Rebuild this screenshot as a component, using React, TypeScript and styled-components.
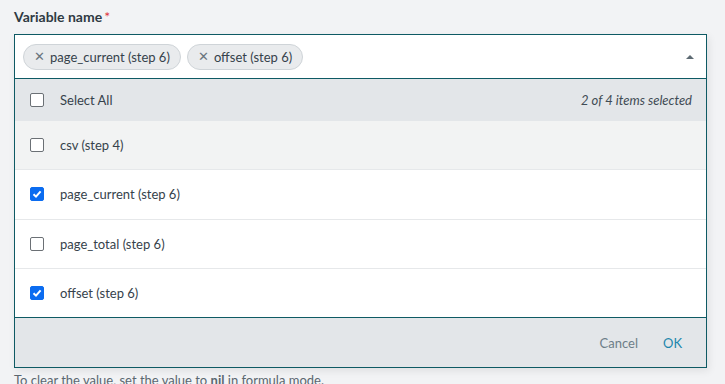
import React from "react";
import styled, { createGlobalStyle } from "styled-components";

const GlobalStyle = createGlobalStyle`
  body {
    margin: 0;
    background: #f2f3f5;
    font-family: "Lato", "Open Sans", sans-serif;
    color: #36424b;
  }
`;

const Page = styled.div`
  padding: 8px 18px 0 14px;
  height: 384px;
  overflow: hidden;
  box-sizing: border-box;
`;

const Label = styled.div`
  font-size: 14px;
  font-weight: 700;
  color: #2f3a43;
  height: 18px;
  line-height: 18px;
  margin-bottom: 8px;
`;

const Required = styled.span`
  color: #e0333a;
  font-weight: 400;
  margin-left: 2px;
`;

const Dropdown = styled.div`
  border: 1px solid #0e5a64;
  background: #fff;
  box-shadow: 2px 3px 8px rgba(0, 0, 0, 0.08);
`;

const Input = styled.div`
  height: 43px;
  display: flex;
  align-items: center;
  padding: 0 12px 0 8px;
  gap: 6px;
  border-bottom: 1px solid #0e5a64;
`;

const Chip = styled.div`
  display: flex;
  align-items: center;
  gap: 5px;
  height: 24px;
  padding: 0 10px;
  border: 1px solid #cfd4d8;
  border-radius: 13px;
  background: #e9ebed;
  font-size: 13px;
  color: #36424b;
`;

const ChipX = styled.span`
  font-size: 13px;
  color: #6a757d;
  line-height: 1;
`;

const Caret = styled.div`
  margin-left: auto;
  width: 0;
  height: 0;
  border-left: 4px solid transparent;
  border-right: 4px solid transparent;
  border-bottom: 4px solid #5d6a73;
`;

const Header = styled.div`
  height: 42px;
  background: #e3e6e9;
  display: flex;
  align-items: center;
  padding: 0 14px 0 15px;
  font-size: 13px;
`;

const Counter = styled.span`
  margin-left: auto;
  font-style: italic;
  color: #3f4b54;
`;

const Row = styled.div<{ $hover?: boolean; $last?: boolean }>`
  height: 48.25px;
  display: flex;
  align-items: center;
  padding: 0 15px;
  font-size: 13px;
  background: ${(p) => (p.$hover ? "#f2f3f3" : "#fff")};
  border-bottom: 1px solid ${(p) => (p.$last ? "#0e5a64" : "#e6e8ea")};
`;

const Box = styled.span<{ $checked?: boolean }>`
  width: 14px;
  height: 14px;
  box-sizing: border-box;
  border-radius: 2px;
  border: 1.5px solid ${(p) => (p.$checked ? "#0b6cf0" : "#6b7075")};
  background: ${(p) => (p.$checked ? "#0b6cf0" : "#fff")};
  display: flex;
  align-items: center;
  justify-content: center;
  margin-right: 16px;
  flex-shrink: 0;
`;

const Footer = styled.div`
  height: 49px;
  background: #e3e6e9;
  display: flex;
  align-items: center;
  justify-content: flex-end;
  padding: 0 24px;
  gap: 25px;
  font-size: 13px;
`;

const Action = styled.span<{ $primary?: boolean }>`
  color: ${(p) => (p.$primary ? "#1c86ad" : "#6d7e88")};
`;

const Help = styled.div`
  margin-top: 4px;
  font-size: 13px;
  color: #5b6770;
`;

const Check = ({ checked }: { checked?: boolean }) => (
  <Box $checked={checked}>
    {checked ? (
      <svg width="10" height="10" viewBox="0 0 10 10">
        <path d="M1.5 5.2 L4 7.6 L8.6 2.4" fill="none" stroke="#fff" strokeWidth="2" />
      </svg>
    ) : null}
  </Box>
);

const items = [
  { name: "csv (step 4)", checked: false, hover: true },
  { name: "page_current (step 6)", checked: true },
  { name: "page_total (step 6)", checked: false },
  { name: "offset (step 6)", checked: true },
];

export default function App() {
  return (
    <Page>
      <GlobalStyle />
      <Label>
        Variable name<Required>*</Required>
      </Label>
      <Dropdown>
        <Input>
          <Chip>
            <ChipX>✕</ChipX>page_current (step 6)
          </Chip>
          <Chip>
            <ChipX>✕</ChipX>offset (step 6)
          </Chip>
          <Caret />
        </Input>
        <Header>
          <Check />
          Select All
          <Counter>2 of 4 items selected</Counter>
        </Header>
        {items.map((item, i) => (
          <Row key={item.name} $hover={item.hover} $last={i === items.length - 1}>
            <Check checked={item.checked} />
            {item.name}
          </Row>
        ))}
        <Footer>
          <Action>Cancel</Action>
          <Action $primary>OK</Action>
        </Footer>
      </Dropdown>
      <Help>
        To clear the value, set the value to <b>nil</b> in formula mode.
      </Help>
    </Page>
  );
}
